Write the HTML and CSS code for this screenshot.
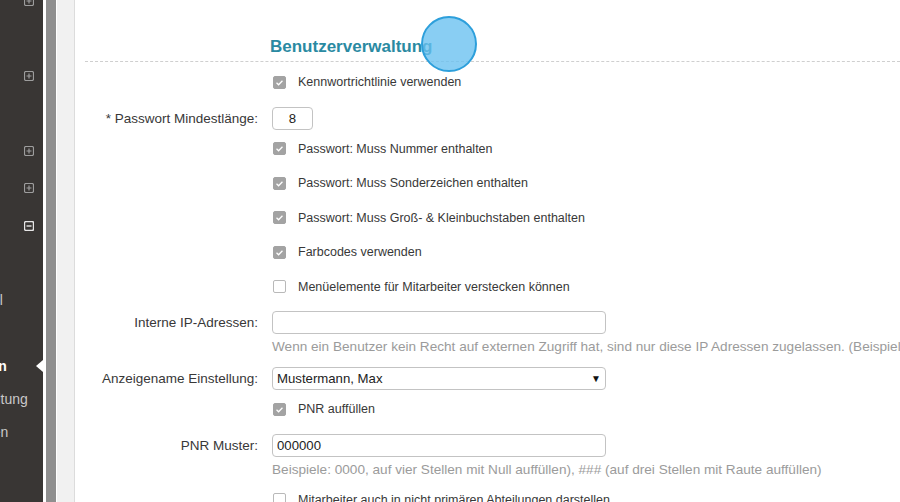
FILE: index.html
```html
<!DOCTYPE html>
<html lang="de">
<head>
    <meta charset="UTF-8">
    <title>Einstellungen - Benutzerverwaltung</title>
    <meta name="viewport" content="width=device-width, initial-scale=1.0">
    <link rel="stylesheet" href="styles.css">
</head>
<body>

<div class="layout">

    <!-- Navigation (nur rechter Rand sichtbar) -->
    <aside class="sidebar">
        <ul class="nav">
            <li class="nav-item">
                <svg class="tree-icon" viewBox="0 0 10 10"><rect x="0.5" y="0.5" width="9" height="9" rx="1.5"/><path d="M5 2.5v5M2.5 5h5"/></svg></li>
            <li class="nav-item"></li>
            <li class="nav-item">
                <svg class="tree-icon" viewBox="0 0 10 10"><rect x="0.5" y="0.5" width="9" height="9" rx="1.5"/><path d="M5 2.5v5M2.5 5h5"/></svg></li>
            <li class="nav-item"></li>
            <li class="nav-item">
                <svg class="tree-icon" viewBox="0 0 10 10"><rect x="0.5" y="0.5" width="9" height="9" rx="1.5"/><path d="M5 2.5v5M2.5 5h5"/></svg></li>
            <li class="nav-item">
                <svg class="tree-icon" viewBox="0 0 10 10"><rect x="0.5" y="0.5" width="9" height="9" rx="1.5"/><path d="M5 2.5v5M2.5 5h5"/></svg></li>
            <li class="nav-item open">
                <svg class="tree-icon" viewBox="0 0 10 10"><rect x="0.5" y="0.5" width="9" height="9" rx="1.5"/><path d="M2.5 5h5"/></svg></li>
        </ul>
        <ul class="subnav">
            <li class="sub-item"></li>
            <li class="sub-item"><span class="nav-label">Monatsprotokoll</span></li>
            <li class="sub-item"></li>
            <li class="sub-item active"><span class="nav-label">Abwesenheiten</span></li>
            <li class="sub-item"><span class="nav-label">Benutzerverwaltung</span></li>
            <li class="sub-item"><span class="nav-label">Importfunktionen</span></li>
        </ul>
    </aside>
    <div class="rail"></div>
    <div class="gutter"></div>

    <!-- Inhalt -->
    <main class="content">
        <div class="section-head">
            <h2>Benutzerverwaltung</h2>
        </div>

        <div class="form">
            <div class="row row-check first">
                <label class="check"><span class="box checked"><svg viewBox="0 0 13 13"><path d="M3 6.8l2.4 2.4L10 4.4"/></svg></span>Kennwortrichtlinie verwenden</label>
            </div>

            <div class="row row-field">
                <span class="label">* Passwort Mindestlänge:</span>
                <div class="field"><input class="input input-small" type="text" value="8"></div>
            </div>

            <div class="row row-check">
                <label class="check"><span class="box checked"><svg viewBox="0 0 13 13"><path d="M3 6.8l2.4 2.4L10 4.4"/></svg></span>Passwort: Muss Nummer enthalten</label>
            </div>
            <div class="row row-check">
                <label class="check"><span class="box checked"><svg viewBox="0 0 13 13"><path d="M3 6.8l2.4 2.4L10 4.4"/></svg></span>Passwort: Muss Sonderzeichen enthalten</label>
            </div>
            <div class="row row-check">
                <label class="check"><span class="box checked"><svg viewBox="0 0 13 13"><path d="M3 6.8l2.4 2.4L10 4.4"/></svg></span>Passwort: Muss Groß- &amp; Kleinbuchstaben enthalten</label>
            </div>
            <div class="row row-check">
                <label class="check"><span class="box checked"><svg viewBox="0 0 13 13"><path d="M3 6.8l2.4 2.4L10 4.4"/></svg></span>Farbcodes verwenden</label>
            </div>
            <div class="row row-check">
                <label class="check"><span class="box"></span>Menüelemente für Mitarbeiter verstecken können</label>
            </div>

            <div class="row row-field">
                <span class="label">Interne IP-Adressen:</span>
                <div class="field">
                    <input class="input" type="text" value="">
                    <p class="hint">Wenn ein Benutzer kein Recht auf externen Zugriff hat, sind nur diese IP Adressen zugelassen. (Beispiel</p>
                </div>
            </div>

            <div class="row row-field">
                <span class="label">Anzeigename Einstellung:</span>
                <div class="field">
                    <div class="input select"><span>Mustermann, Max</span><span class="arrow">▼</span></div>
                </div>
            </div>

            <div class="row row-check">
                <label class="check"><span class="box checked"><svg viewBox="0 0 13 13"><path d="M3 6.8l2.4 2.4L10 4.4"/></svg></span>PNR auffüllen</label>
            </div>

            <div class="row row-field">
                <span class="label">PNR Muster:</span>
                <div class="field">
                    <input class="input" type="text" value="000000">
                    <p class="hint">Beispiele: 0000, auf vier Stellen mit Null auffüllen), ### (auf drei Stellen mit Raute auffüllen)</p>
                </div>
            </div>

            <div class="row row-check">
                <label class="check"><span class="box"></span>Mitarbeiter auch in nicht primären Abteilungen darstellen</label>
            </div>
        </div>

        <!-- Klick-Markierung -->
        <div class="click-marker"></div>
    </main>
</div>

</body>
</html>
```

FILE: styles.css
```css
html, body {
    margin: 0;
    height: 502px;
    overflow: hidden;
    background: #fff;
    font-family: "Liberation Sans", Arial, sans-serif;
}
.layout {
    display: flex;
    height: 502px;
}

/* Navigation */
.sidebar {
    width: 43px;
    flex: none;
    background: #393634;
    border-right: 3px solid #fff;
}
.nav, .subnav {
    list-style: none;
    margin: 0;
    padding: 0;
}
.nav {
    margin-top: -18px;
}
.nav-item {
    height: 37.5px;
    display: flex;
    align-items: center;
    justify-content: flex-end;
    padding-right: 9px;
}
.tree-icon {
    width: 10px;
    height: 10px;
    fill: none;
    stroke: #9d9d9d;
    stroke-width: 1.2;
}
.nav-item.open .tree-icon {
    stroke: #e6e6e6;
    stroke-width: 1.4;
}
.subnav {
    padding-top: 6px;
}
.sub-item {
    height: 33px;
    display: flex;
    align-items: center;
    position: relative;
    color: #c9c9c9;
    font-size: 14px;
}
.sub-item .nav-label {
    margin-left: -96px;
    white-space: nowrap;
}
.sub-item.active {
    color: #fff;
    font-weight: bold;
}
.sub-item.active::after {
    content: "";
    position: absolute;
    right: 0;
    top: 10px;
    border-top: 6px solid transparent;
    border-bottom: 6px solid transparent;
    border-right: 7px solid #fff;
}
.rail {
    width: 10px;
    flex: none;
    background: #8f8f8f;
}
.gutter {
    width: 17px;
    flex: none;
    background: #f1f1f1;
    border-left: 1px solid #fff;
    border-right: 1px solid #dcdcdc;
}

/* Inhalt */
.content {
    flex: 1;
    position: relative;
    padding-left: 10px;
    color: #333;
}
.section-head {
    padding: 36px 0 3px;
    border-bottom: 1px dashed #cfcfcf;
}
.section-head h2 {
    margin: 0 0 0 185px;
    font-size: 17px;
    line-height: 22px;
    font-weight: bold;
    color: #2a8aa2;
}
.row {
    display: grid;
    grid-template-columns: 173px 334px;
    column-gap: 14px;
}
.row.first {
    margin-top: 3px;
}
.row-check {
    height: 34.5px;
    align-items: center;
}
.row-field {
    padding: 7px 0 2px;
    align-items: start;
}
.label {
    text-align: right;
    font-size: 13.5px;
    line-height: 23px;
    white-space: nowrap;
    color: #383838;
}
.check {
    grid-column: 2;
    display: flex;
    align-items: center;
    gap: 12px;
    margin-left: 1px;
    font-size: 12.5px;
    white-space: nowrap;
    color: #383838;
}
.box {
    width: 13px;
    height: 13px;
    box-sizing: border-box;
    border: 1px solid #b9b9b9;
    border-radius: 2px;
    background: #fff;
    flex: none;
}
.box.checked {
    background: #a3a3a3;
    border-color: #a3a3a3;
}
.box svg {
    display: block;
    width: 11px;
    height: 11px;
    fill: none;
    stroke: #fff;
    stroke-width: 1.5;
}
.field {
    grid-column: 2;
}
.input {
    display: block;
    width: 334px;
    height: 23px;
    box-sizing: border-box;
    margin: 0;
    padding: 0 4px;
    border: 1px solid #c3c3c3;
    border-radius: 4px;
    background: #fff;
    font-family: "Liberation Sans", Arial, sans-serif;
    font-size: 13.2px;
    color: #222;
    outline: none;
}
.input-small {
    width: 41px;
    text-align: center;
}
.select {
    display: flex;
    align-items: center;
    justify-content: space-between;
    padding-right: 4px;
}
.select .arrow {
    font-size: 10px;
    color: #111;
}
.hint {
    margin: 6px 0 4px;
    font-size: 13.6px;
    line-height: 14px;
    color: #9b9b9b;
    white-space: nowrap;
}
.click-marker {
    position: absolute;
    left: 346px;
    top: 16px;
    width: 56px;
    height: 56px;
    box-sizing: border-box;
    border-radius: 50%;
    border: 2px solid #2d9fdb;
    background: rgba(104, 192, 240, 0.78);
}
```
